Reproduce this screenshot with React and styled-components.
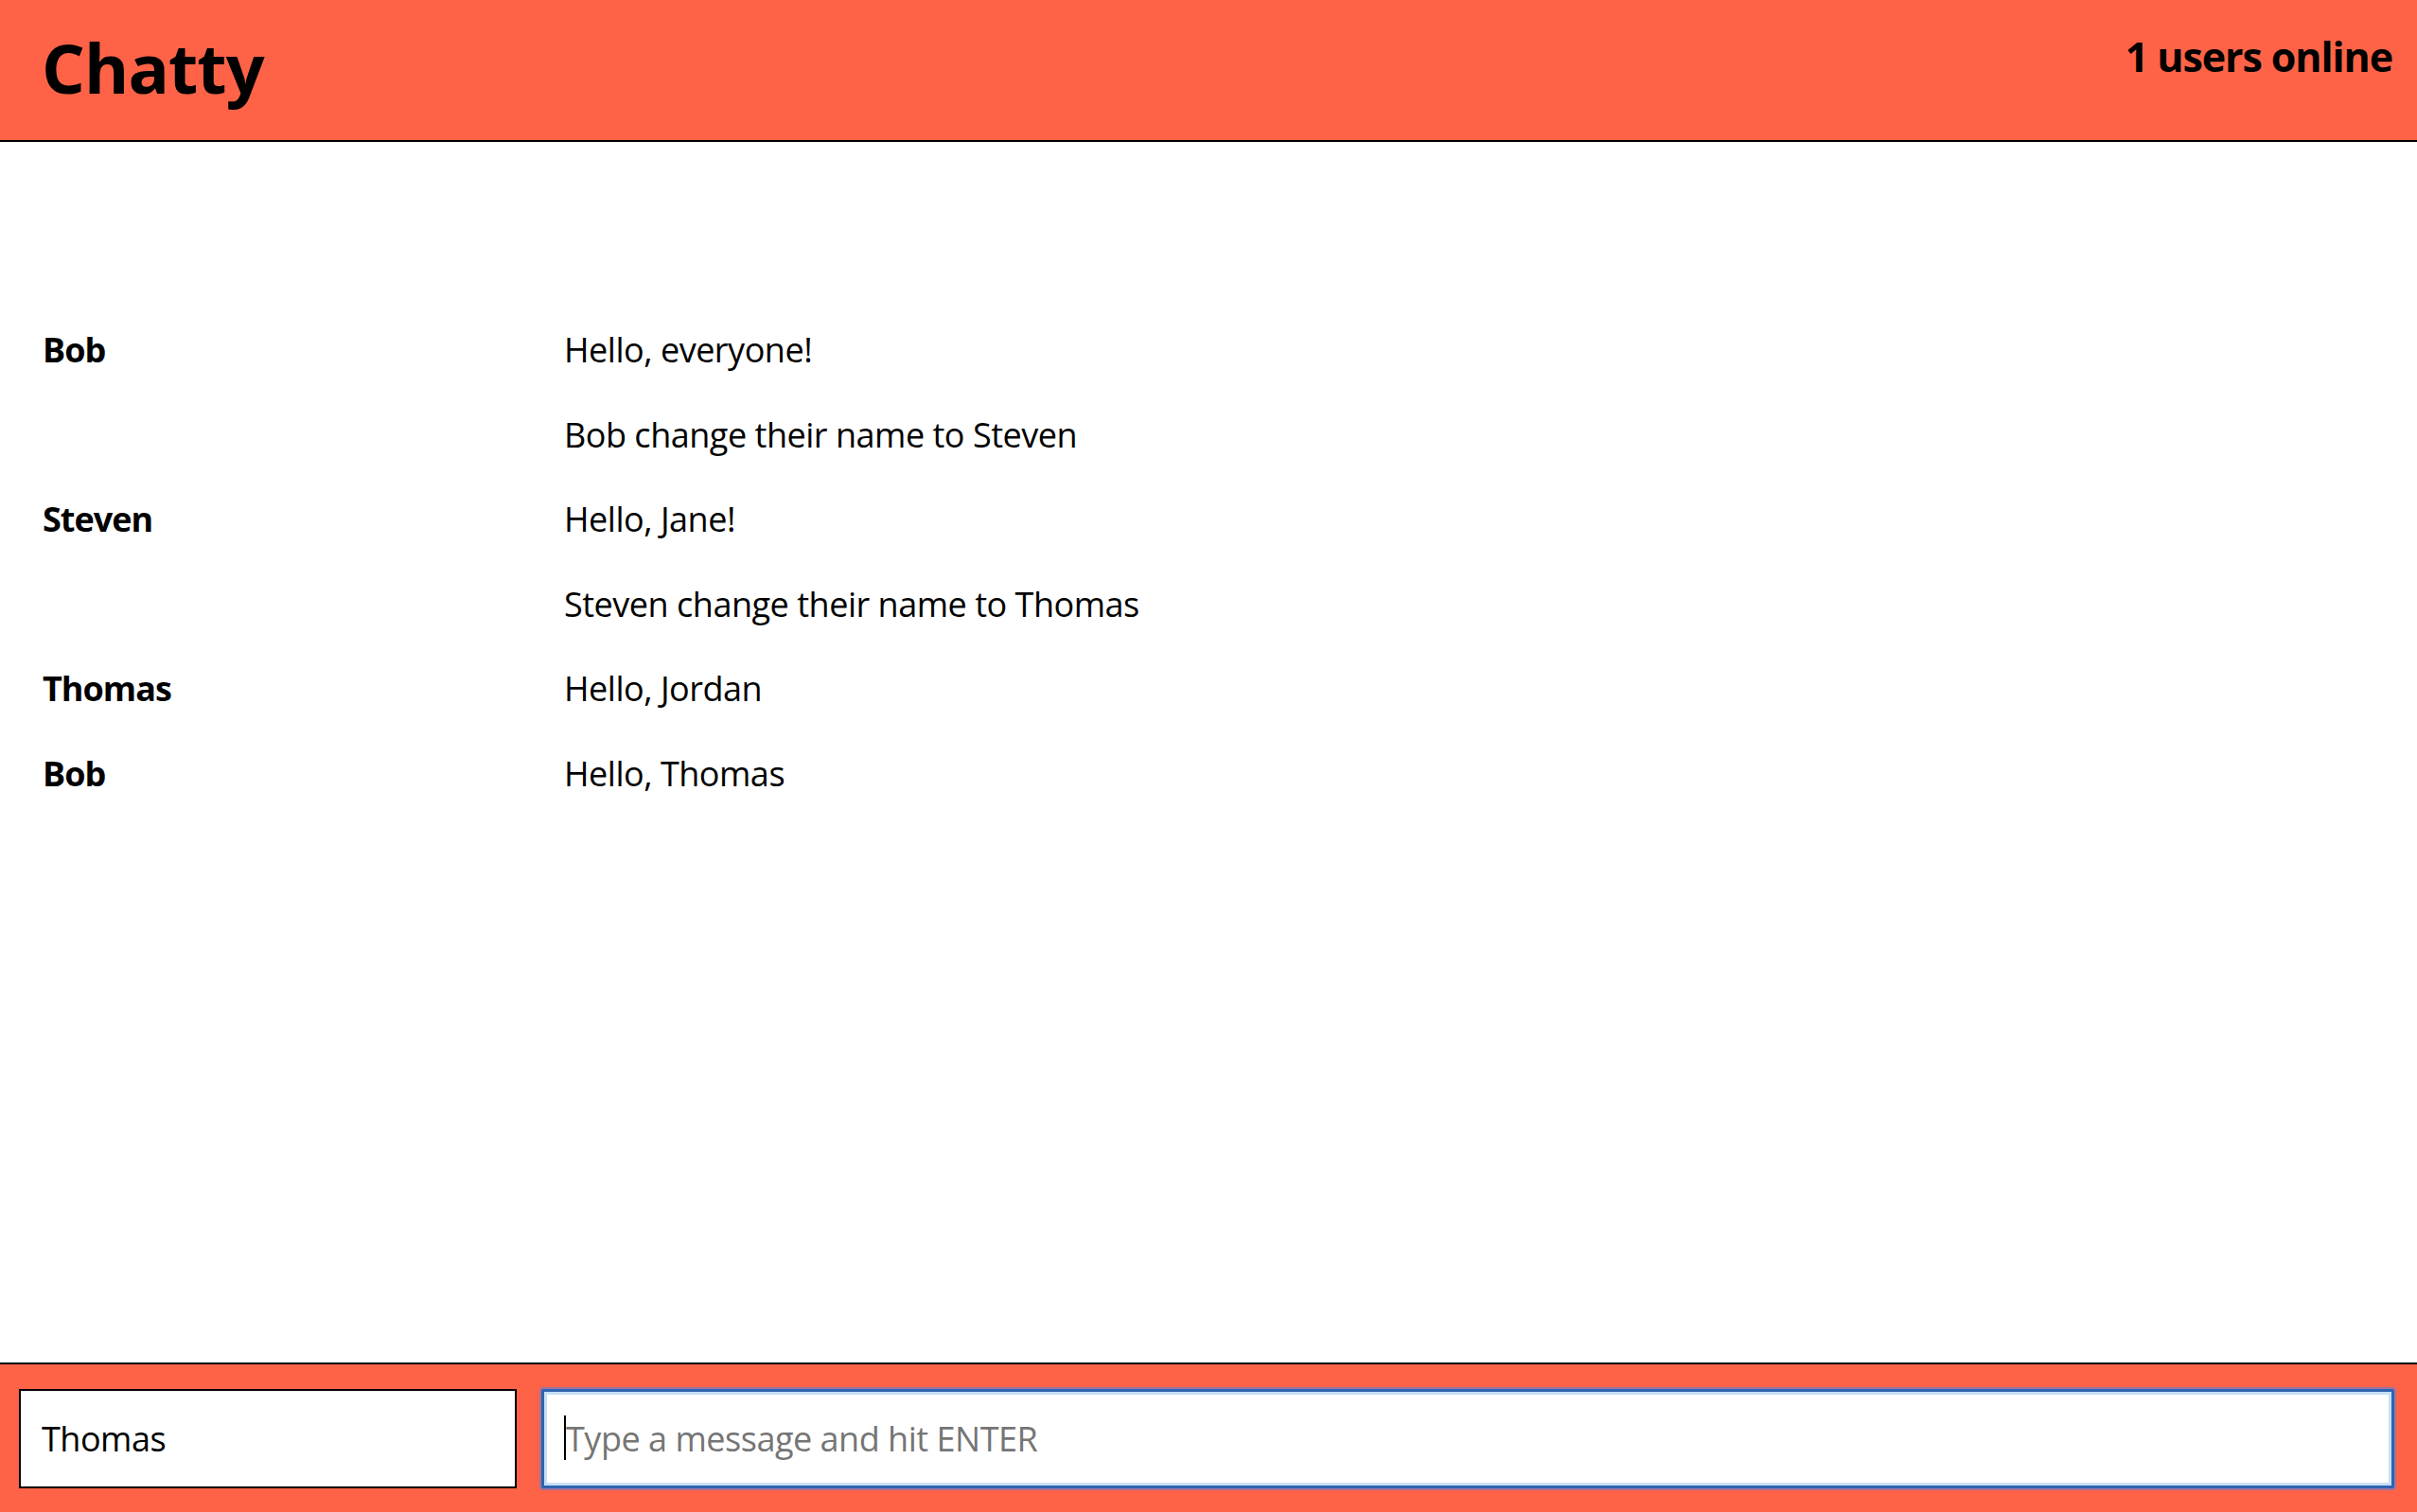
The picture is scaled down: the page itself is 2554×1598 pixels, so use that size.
import React from 'react';
import styled, { createGlobalStyle } from 'styled-components';

const GlobalStyle = createGlobalStyle`
  html, body {
    margin: 0;
    padding: 0;
    height: 100%;
  }
  body {
    font-family: "Open Sans", "Liberation Sans", sans-serif;
    color: #000;
    background: #fff;
  }
  #root {
    height: 100%;
  }
`;

const Page = styled.div`
  display: flex;
  flex-direction: column;
  height: 100vh;
  overflow: hidden;
`;

const Navbar = styled.nav`
  display: flex;
  justify-content: space-between;
  align-items: flex-start;
  height: 148px;
  padding: 0 26px 0 44px;
  background: #ff6347;
  border-bottom: 2px solid #000;
  flex-shrink: 0;
`;

const Brand = styled.h1`
  margin: 0;
  padding-top: 22px;
  font-size: 72px;
  font-weight: 700;
  line-height: normal;
  letter-spacing: -0.9px;
`;

const Online = styled.span`
  padding-top: 30px;
  font-size: 43px;
  font-weight: 700;
  line-height: normal;
  letter-spacing: -1.1px;
`;

const MessageList = styled.main`
  flex: 1;
  display: flex;
  flex-direction: column;
  gap: 40px;
  padding: 195px 45px 0;
`;

const Message = styled.div`
  display: grid;
  grid-template-columns: 551px 1fr;
  font-size: 36px;
  line-height: 49.6px;
`;

const Username = styled.span`
  font-weight: 700;
  letter-spacing: -1px;
`;

const Content = styled.span`
  font-weight: 400;
  letter-spacing: -0.48px;
`;

const ChatBar = styled.footer`
  display: flex;
  gap: 26px;
  height: 158px;
  padding: 26px 24px 0 20px;
  box-sizing: border-box;
  background: #ff6347;
  border-top: 2px solid #000;
  flex-shrink: 0;
`;

const Field = styled.input`
  box-sizing: border-box;
  height: 105px;
  padding: 0 22px;
  font-family: "Open Sans", "Liberation Sans", sans-serif;
  font-size: 36px;
  letter-spacing: -0.48px;
  color: #000;
  background: #fff;
  border: 2px solid #000;
  border-radius: 0;
  outline: none;

  &::placeholder {
    color: #757575;
  }
`;

const NameField = styled(Field)`
  width: 526px;
  flex-shrink: 0;
`;

const MessageWrap = styled.div`
  position: relative;
  flex: 1;
  display: flex;

  &::before {
    content: '';
    position: absolute;
    left: 24px;
    top: 28px;
    width: 2px;
    height: 47px;
    background: #000;
  }
`;

const MessageField = styled(Field)`
  flex: 1;
  min-width: 0;
  border: 3px solid #2f64ae;
  padding-left: 23px;
  box-shadow: inset 0 0 0 3px #c6dff7, 0 0 0 2px rgba(130, 120, 190, 0.75);
  border-radius: 2px;
`;

const messages = [
  { id: 1, user: 'Bob', text: 'Hello, everyone!' },
  { id: 2, user: '', text: 'Bob change their name to Steven' },
  { id: 3, user: 'Steven', text: 'Hello, Jane!' },
  { id: 4, user: '', text: 'Steven change their name to Thomas' },
  { id: 5, user: 'Thomas', text: 'Hello, Jordan' },
  { id: 6, user: 'Bob', text: 'Hello, Thomas' },
];

export default function App() {
  return (
    <Page>
      <GlobalStyle />
      <Navbar>
        <Brand>Chatty</Brand>
        <Online>1 users online</Online>
      </Navbar>

      <MessageList>
        {messages.map(m => (
          <Message key={m.id}>
            <Username>{m.user}</Username>
            <Content>{m.text}</Content>
          </Message>
        ))}
      </MessageList>

      <ChatBar>
        <NameField defaultValue="Thomas" />
        <MessageWrap>
          <MessageField placeholder="Type a message and hit ENTER" />
        </MessageWrap>
      </ChatBar>
    </Page>
  );
}
